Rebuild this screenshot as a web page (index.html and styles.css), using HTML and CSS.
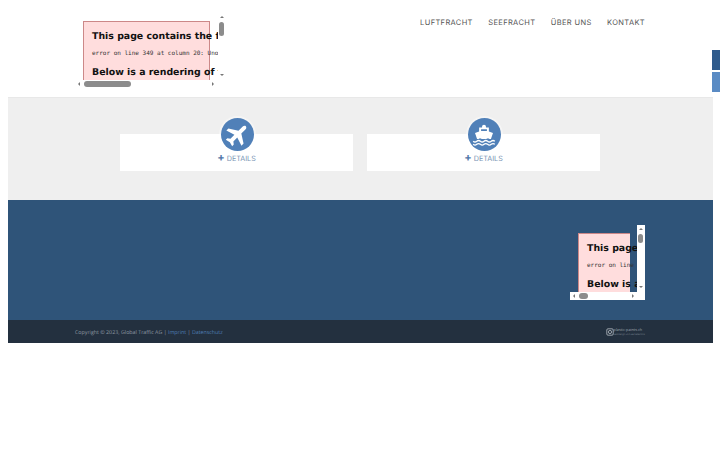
FILE: index.html
```html
<!DOCTYPE html>
<html lang="de">
<head>
<meta charset="UTF-8" />
<title>Global Traffic AG</title>
<link rel="stylesheet" href="styles.css">
</head>
<body>
<div class="side-tabs">
  <div class="side-tab dark"></div>
  <div class="side-tab light"></div>
</div>
<div class="page">
  <header class="header">
    <div class="embed embed-logo">
      <div class="xml-error">
        <h3>This page contains the following errors:</h3>
        <div class="xml-line">error on line 349 at column 20: Unopened tag</div>
        <h3>Below is a rendering of the page</h3>
      </div>
      <div class="bar-v"><i class="arrow up"></i><b class="thumb"></b><i class="arrow down"></i></div>
      <div class="bar-h"><i class="arrow left"></i><b class="thumb"></b><i class="arrow right"></i></div>
    </div>
    <nav class="nav">
      <a href="#">LUFTFRACHT</a>
      <a href="#">SEEFRACHT</a>
      <a href="#">ÜBER UNS</a>
      <a href="#">KONTAKT</a>
    </nav>
  </header>

  <section class="services">
    <a class="card" href="#">
      <span class="badge">
        <svg viewBox="0 0 24 24" width="27" height="27"><path transform="rotate(45 12 12)" d="M21.500 16.500v-2.600L13.800 9V3.600C13.800 2.700 12.900 1.500 12 1.500s-1.800 1.200-1.800 2.100V9l-7.700 4.900v2.600l7.700-2.400V19l-2.200 1.700v2l4-1.100 4 1.100v-2L13.800 19v-4.900z"/></svg>
      </span>
      <span class="details"><b>+</b> DETAILS</span>
    </a>
    <a class="card" href="#">
      <span class="badge">
        <svg viewBox="0 0 24 24" width="26" height="26"><path d="M10.200 4.200q0-1.700 1.800-1.700t1.800 1.700V5h2.700v3.700l3.800 1.400-1.900 5.700q-1.200 0-2.700-.9-1.700.9-3.700.9t-3.700-.9q-1.500.9-2.700.9L3.700 10.100l3.800-1.400V5h2.700zM9.300 6.800v1.400h5.400V6.800z"/><path class="waves" d="M2 17.800q1.700 1.400 3.333 0t3.333 0 3.333 0 3.333 0 3.333 0 3.333 0M2 20.600q1.700 1.400 3.333 0t3.333 0 3.333 0 3.333 0 3.333 0 3.333 0"/></svg>
      </span>
      <span class="details"><b>+</b> DETAILS</span>
    </a>
  </section>

  <section class="contact">
    <div class="embed embed-map">
      <div class="xml-error">
        <h3>This page contains the following errors:</h3>
        <div class="xml-line">error on line 349 at column 20: Unopened tag</div>
        <h3>Below is a rendering of the page</h3>
      </div>
      <div class="bar-v"><i class="arrow up"></i><b class="thumb"></b><i class="arrow down"></i></div>
      <div class="bar-h"><i class="arrow left"></i><b class="thumb"></b><i class="arrow right"></i></div>
    </div>
  </section>

  <footer class="footer">
    <p class="copyright">Copyright © 2023, Global Traffic AG | <a href="#">Imprint</a> | <a href="#">Datenschutz</a></p>
    <div class="credit">
      <svg viewBox="0 0 10 10" width="8" height="8"><rect x="1" y="1" width="8" height="8" rx="1.500"/><circle cx="5" cy="5" r="2"/></svg>
      <span class="credit-text">plastic-paints.ch<small>webdesign und werbetechnik</small></span>
    </div>
  </footer>
</div>
</body>
</html>
```

FILE: styles.css
```css
html, body { margin:0; padding:0; background:#fff; }
body { font-family:"Inter","Open Sans",sans-serif; height:450px; overflow:hidden; text-rendering:geometricPrecision; }
.page { margin:0 7px 0 8px; }

.side-tabs { position:fixed; right:0; top:50px; width:8px; }
.side-tab { height:20px; margin-bottom:2px; }
.side-tab.dark { background:#2f5b8c; }
.side-tab.light { background:#5a8bc4; }

/* header */
.header { height:97px; border-bottom:1px solid #e8e8e8; display:flex; justify-content:space-between; align-items:flex-start; }
.nav { display:flex; gap:15.500px; margin:18px 68px 0 0; }
.nav a { font-size:7.500px; line-height:9px; letter-spacing:.35px; color:#555; text-decoration:none; }

/* broken embed */
.embed { position:relative; overflow:hidden; }
.embed-logo { width:150px; height:75px; margin:13px 0 0 67px; background:#fff; }
.embed-map { width:75px; height:75px; margin:25px 68px 0 0; }
.xml-error { width:117px; height:90px; margin:8px 0 0 8px; padding:0 0 0 8px; border:1px solid #c88; background:#fdd; color:#111; white-space:nowrap; font-family:"DejaVu Sans",sans-serif; }
.embed-map .xml-error { width:43px; border-right:0; }
.xml-error h3 { margin:0; padding-top:8px; font-size:9.400px; line-height:13px; font-weight:bold; }
.xml-line { margin:7px 0 8px; font-family:"DejaVu Sans Mono",monospace; font-size:6px; line-height:8px; color:#333; }
.xml-line + h3 { padding-top:0; }

/* scrollbars of the embed */
.bar-v, .bar-h { position:absolute; background:#fff; }
.bar-v { top:0; right:0; width:7px; height:100%; }
.bar-h { left:0; bottom:0; height:8px; width:100%; }
.embed-map .bar-v { width:8px; }
.thumb { position:absolute; background:#8c8c8c; border-radius:3px; }
.bar-v .thumb { left:1px; top:9px; width:5px; height:14px; }
.bar-h .thumb { left:9px; top:1px; height:6px; width:47px; }
.embed-map .bar-v .thumb { height:9px; }
.embed-map .bar-h .thumb { width:9px; }
.arrow { position:absolute; width:0; height:0; border:2px solid transparent; }
.arrow.up { top:1px; left:2px; border-bottom-color:#777; }
.arrow.down { bottom:10px; left:2px; border-top-color:#777; }
.arrow.left { left:1px; top:2px; border-right-color:#777; }
.arrow.right { right:9px; top:2px; border-left-color:#777; }

/* service cards */
.services { height:102px; background:#efefef; display:flex; justify-content:center; gap:14px; padding:36px 1px 0 0; box-sizing:border-box; }
.card { width:233px; height:37px; background:#fff; position:relative; text-align:center; text-decoration:none; display:block; }
.badge { position:absolute; left:50%; top:-16px; margin-left:-16px; width:33px; height:33px; border-radius:50%; background:#5080b8; box-shadow:0 0 0 2px rgba(255,255,255,.4); display:flex; align-items:center; justify-content:center; }
.badge svg { fill:#fff; }
.badge .waves { fill:none; stroke:#fff; stroke-width:1.200px; }
.details { display:block; padding-top:19px; font-size:7.200px; line-height:10px; color:#7b96b5; }
.details b { color:#4f78a8; font-size:11px; line-height:8px; }

/* blue block */
.contact { height:120px; background:#2f5479; display:flex; justify-content:flex-end; }

/* footer */
.footer { height:23px; background:#23303f; display:flex; justify-content:space-between; align-items:center; padding:0 68px 0 67px; font-family:"Open Sans",sans-serif; }
.copyright { margin:0; font-size:5.300px; color:#8f99a3; }
.copyright a { color:#4f7fb5; text-decoration:none; }
.credit { display:flex; align-items:center; color:#9aa3ad; }
.credit svg { fill:none; stroke:#b5bbc2; stroke-width:1; }
.credit-text { font-size:3.800px; line-height:5px; display:block; }
.credit-text small { display:block; font-size:2.300px; line-height:3px; color:#7c8792; }
```
